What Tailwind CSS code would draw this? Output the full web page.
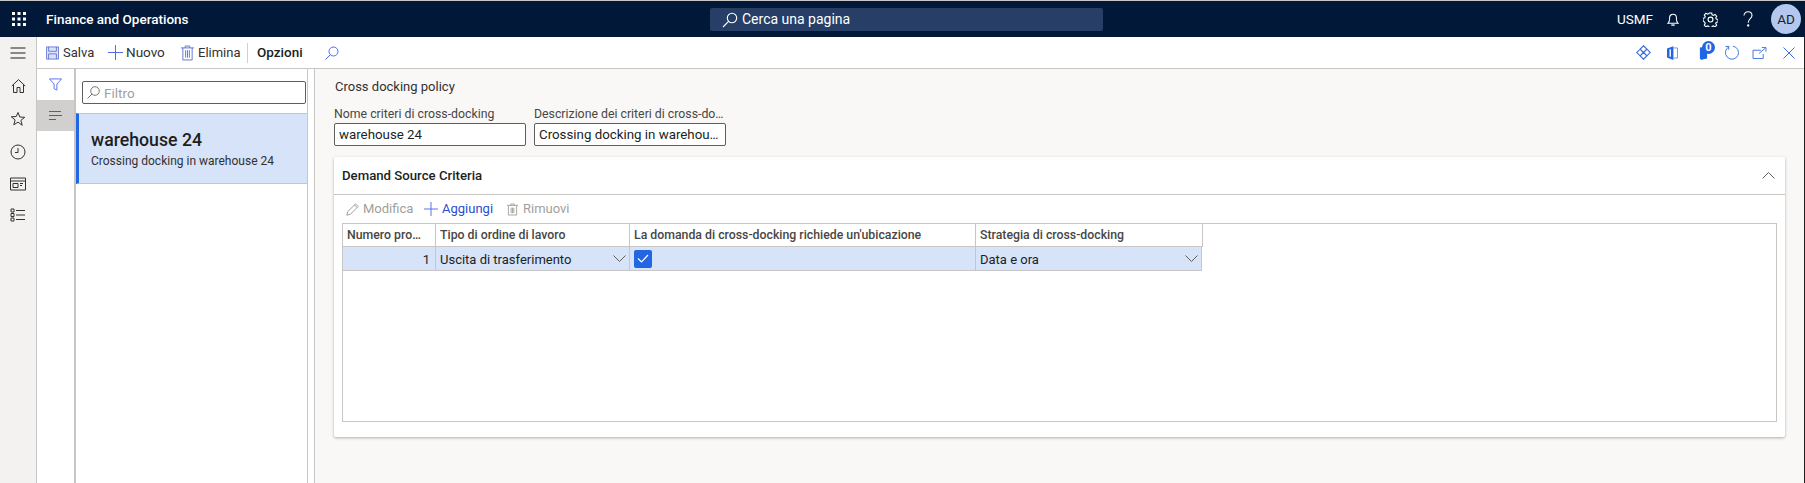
<!DOCTYPE html>
<html><head><meta charset="utf-8"><script src="https://cdn.jsdelivr.net/npm/@tailwindcss/browser@4"></script></head>
<body class="m-0 overflow-hidden">
<div class="w-[1805px] h-[483px] flex flex-col overflow-hidden bg-white text-[13px] text-[#201f1e] font-['Roboto','Open_Sans',sans-serif]">
<header class="h-[37px] shrink-0 border-t border-[#c8c6c4] bg-[#011838] text-white flex items-center relative">
  <div class="w-[37px] flex justify-center"><svg width="16" height="16" viewBox="0 0 16 16" fill="#fff"><rect x="1" y="1" width="3" height="3"/><rect x="6.500" y="1" width="3" height="3"/><rect x="12" y="1" width="3" height="3"/><rect x="1" y="6.500" width="3" height="3"/><rect x="6.500" y="6.500" width="3" height="3"/><rect x="12" y="6.500" width="3" height="3"/><rect x="1" y="12" width="3" height="3"/><rect x="6.500" y="12" width="3" height="3"/><rect x="12" y="12" width="3" height="3"/></svg></div>
  <div class="ml-[9px] font-medium text-[13.500px]">Finance and Operations</div>
  <div class="absolute left-[710px] top-[7px] w-[393px] h-[23px] rounded-[2px] bg-[#273f66] flex items-center pl-[12px] gap-[4px] text-[14px]">
    <svg width="16" height="16" viewBox="0 0 16 16" fill="none" stroke="#fff" stroke-width="1.100"><circle cx="10" cy="6" r="4.700"/><path d="M6.600 9.400 1 15"/></svg><span>Cerca una pagina</span></div>
  <div class="ml-auto flex items-center pr-[4px]">
    <span class="text-[13.500px] mr-[14px]">USMF</span>
    <svg class="mr-[24px]" width="12" height="15" viewBox="0 0 14 16" fill="none" stroke="#fff" stroke-width="1.200"><path d="M1 12.500c1.600-1 2-2.300 2-5V6a4 4 0 0 1 8 0v1.500c0 2.700.4 4 2 5z"/><path d="M5 14.500h4" stroke-width="1.600"/></svg>
    <svg class="mr-[25px]" width="15" height="15" viewBox="0 0 16 16" fill="none" stroke="#fff" stroke-width="1.200"><circle cx="8" cy="8" r="2.600"/><path d="M6.700 1h2.600l.4 2 1.300.6 1.800-1 1.800 1.900-1 1.700.6 1.300 1.900.5v2.600l-1.900.4-.6 1.300 1 1.800-1.800 1.700-1.800-1-1.300.6-.4 2H6.700l-.4-2-1.300-.6-1.800 1-1.800-1.700 1-1.800-.6-1.300L0 9.300V6.700l1.800-.5.600-1.300-1-1.700 1.800-1.900 1.800 1 1.300-.6z"/></svg>
    <svg class="mr-[18px]" width="10" height="16" viewBox="0 0 10 16" fill="none" stroke="#fff" stroke-width="1.100"><path d="M1 4.500C1 2.300 2.800.8 5 .8s4 1.500 4 3.700c0 3-3.800 3.300-3.800 7.200"/><circle cx="5.200" cy="14.500" r=".6" fill="#fff"/></svg>
    <div class="w-[30px] h-[30px] rounded-full bg-[#b4c7ef] text-[#201f1e] flex items-center justify-center text-[13.500px]">AD</div>
  </div>
</header>
<div class="flex-1 flex min-h-0 border-r border-[#1f1f1f]">
  <nav class="w-[37px] shrink-0 bg-[#f3f2f1] border-r border-[#c8c6c4] flex flex-col items-center pt-[8px] gap-[17px]">
    <svg width="16" height="16" viewBox="0 0 16 16" stroke="#201f1e" stroke-width="1.100"><path d="M.5 3h15M.5 8h15M.5 13h15"/></svg>
    <svg width="15" height="16" viewBox="0 0 15 16" fill="none" stroke="#323130"><path d="M.8 8 7.500 1.600 14.200 8M2.500 6.500v8h3.500v-5h3v5h3.500v-8"/></svg>
    <svg width="16" height="16" viewBox="0 0 16 16" fill="none" stroke="#323130"><path d="m8 1.500 1.800 4.500 4.900.3-3.800 3.100 1.300 4.900L8 11.100l-4.200 2.700 1.300-4.900-3.800-3.100 4.900-.3z"/></svg>
    <svg width="16" height="16" viewBox="0 0 16 16" fill="none" stroke="#323130"><circle cx="8" cy="8" r="7"/><path d="M8 4v4.500H5"/></svg>
    <svg width="16" height="14" viewBox="0 0 16 14" fill="none" stroke="#323130"><path d="M.5 1h15v12H.5zM.5 4h15"/><path d="M3 6.500h5v4H3zM10 6.500h3M10 8.500h2"/></svg>
    <svg width="16" height="14" viewBox="0 0 16 14" fill="none" stroke="#323130"><path d="M1 1h3v3H1zM1 5.500h3v3H1zM1 10h3v3H1zM6 2.500h9M6 7h9M6 11.500h9"/></svg>
  </nav>
  <div class="flex-1 flex flex-col min-w-0">
    <div class="h-[32px] shrink-0 border-b border-[#c8c6c4] bg-white flex items-center">
      <div class="flex items-center pl-[9px] text-[13px] text-[#323130]">
        <svg class="mr-[4px]" width="13" height="14" viewBox="0 0 15 15" fill="#dbe2f7" stroke="#5d6fd6"><path d="M.5.500h14v14H.5z"/><path d="M3 .5v5h9v-5M3 14.500v-6h9v6" fill="none"/></svg><span class="w-[45px]">Salva</span>
        <svg class="mr-[3px]" width="15" height="15" viewBox="0 0 15 15" stroke="#4f6bed"><path d="M0 7.500h15M7.500 0v15"/></svg><span class="w-[55px] text-[13.500px]">Nuovo</span>
        <svg class="mr-[4px]" width="13" height="16" viewBox="0 0 14 16" fill="none" stroke="#5d6fd6"><path d="M0 2.500h14M4.500 2.500v-2h5v2M2 2.500v13h10v-13M5 5v8M7 5v8M9 5v8"/></svg><span class="w-[49px]">Elimina</span>
        <div class="w-px h-[20px] bg-[#d2d0ce] mr-[9px]"></div>
        <span class="font-medium text-[13.500px] text-[#201f1e] w-[68px]">Opzioni</span>
        <svg width="14" height="14" viewBox="0 0 14 14" fill="none" stroke="#4f6bed"><circle cx="8.500" cy="5.500" r="4.500"/><path d="M5.300 8.700.5 13.500"/></svg>
      </div>
      <div class="ml-auto flex items-center pr-[9px]">
        <svg class="mr-[16px]" width="15" height="15" viewBox="0 0 16 16" fill="none" stroke="#3b6fe0" stroke-width="1.200"><path d="m8 .8 3.500 3.500L8 7.800 4.500 4.300zM4.300 4.500 7.800 8l-3.500 3.500L.8 8zM11.700 4.500 15.200 8l-3.500 3.500L8.200 8zM8 8.200l3.500 3.500L8 15.200l-3.500-3.500z"/></svg>
        <svg class="mr-[21px]" width="11" height="14" viewBox="0 0 12 15"><path d="M0 2.500 7 0v15l-7-2.500z" fill="#2266e3"/><path d="M7 2h4.500v11H7" fill="none" stroke="#6d8fd9"/><path d="M3.500 3.500v8" stroke="#fff" stroke-width="1.500"/></svg>
        <div class="relative w-[16px] h-[16px] mr-[9px]"><svg width="9" height="16" viewBox="0 0 10 16"><path d="M1 2v12c0 1 3 2 4 1l4-1V1z" fill="#2266e3"/></svg><span class="absolute left-[3px] top-[-4px] w-[13px] h-[13px] rounded-full bg-[#2266e3] text-white text-[11px] font-bold flex items-center justify-center leading-none">0</span></div>
        <svg class="mr-[13px]" width="15" height="15" viewBox="0 0 16 16" fill="none" stroke="#3b6fe0"><path d="M5.500 1.800A7 7 0 1 0 9.500 1.200M5 5V1.500H1.500"/></svg>
        <svg class="mr-[16px]" width="15" height="12" viewBox="0 0 15 13" fill="none" stroke="#3b6fe0"><path d="M9 3.500H.5v9h11v-5M7 7l7-6M10 .5h4.500V5"/></svg>
        <svg width="12" height="12" viewBox="0 0 12 12" stroke="#3b6fe0"><path d="m.5.5 11 11M11.500.5l-11 11"/></svg>
      </div>
    </div>
    <div class="flex-1 flex min-h-0">
      <aside class="w-[37px] shrink-0 bg-white flex flex-col">
        <div class="h-[31px] flex items-center justify-center"><svg width="13" height="13" viewBox="0 0 14 13" fill="none" stroke="#4f6bed"><path d="M.5.5h13L8.500 6v6.500l-3-1.500V6z"/></svg></div>
        <div class="h-[31px] bg-[#d2d0ce] flex items-center justify-center"><svg width="13" height="9" viewBox="0 0 13 9" stroke="#2266e3"><path d="M0 .5h12M0 4.500h13M0 8.500h7"/></svg></div>
      </aside>
      <div class="w-[241px] shrink-0 bg-white border-r border-[#c8c6c4] pr-[6px]">
      <section class="h-full border-l-2 border-r border-[#c8c6c4] flex flex-col pt-[12px]">
        <div class="ml-[6px] mr-[1px] h-[23px] border border-[#605e5c] rounded-[2px] flex items-center pl-[4px] gap-[4px] text-[13.500px] text-[#a19f9d]">
          <svg width="13" height="13" viewBox="0 0 13 13" fill="none" stroke="#797775"><circle cx="8" cy="5" r="4.300"/><path d="M5 8 .5 12.500"/></svg><span class="pt-[2px]">Filtro</span></div>
        <div class="mt-[9px] border-y-1 border-[#c8c6c4] border-l-[3px] border-l-[#2266e3] bg-[#d7e3f8] h-[71px] pl-[12px] pt-[14px]">
          <div class="text-[17.700px] leading-[24px] font-medium text-[#201f1e]">warehouse 24</div>
          <div class="text-[12px] leading-[18px] text-[#323130]">Crossing docking in warehouse 24</div>
        </div>
      </section>
      </div>
      <main class="flex-1 min-w-0 bg-[#f9f8f6] pl-[19px] pr-[19px] pt-[9px] flex flex-col">
        <div class="text-[13px] leading-[18px] pl-[1px] text-[#323130]">Cross docking policy</div>
        <div class="flex gap-[8px] mt-[10px]">
          <div class="w-[192px]"><div class="text-[12.300px] leading-[16px] mb-[1px] text-[#484644] truncate">Nome criteri di cross-docking</div><div class="h-[23px] border border-[#605e5c] rounded-[2px] bg-white px-[4px] leading-[21px] text-[13.300px]">warehouse 24</div></div>
          <div class="w-[192px]"><div class="text-[12.300px] leading-[16px] mb-[1px] text-[#484644] truncate">Descrizione dei criteri di cross-docking</div><div class="h-[23px] border border-[#605e5c] rounded-[2px] bg-white px-[4px] leading-[21px] text-[13.300px] truncate">Crossing docking in warehouse 24</div></div>
        </div>
        <div class="mt-[11px] h-[280px] bg-white shadow-[0_1px_3px_rgba(0,0,0,0.3)] rounded-[2px] flex flex-col">
          <div class="h-[38px] shrink-0 border-b border-[#c8c6c4] flex items-center justify-between pl-[8px] pr-[10px]">
            <span class="font-medium text-[13.200px]">Demand Source Criteria</span>
            <svg width="13" height="7" viewBox="0 0 13 7" fill="none" stroke="#605e5c"><path d="m.5 6.500 6-6 6 6"/></svg>
          </div>
          <div class="h-[28px] shrink-0 flex items-center pl-[12px] text-[13px]">
            <svg class="mr-[4px]" width="13" height="13" viewBox="0 0 13 13" fill="none" stroke="#a19f9d"><path d="m.8 12.200.9-3.500L9.500.9l2.600 2.600-7.800 7.800zM8.500 2 11 4.500"/></svg><span class="text-[#a19f9d] w-[61px]">Modifica</span>
            <svg class="mr-[4px]" width="14" height="14" viewBox="0 0 15 15" stroke="#4f6bed"><path d="M0 7.500h15M7.500 0v15"/></svg><span class="text-[#2b4ed1] w-[65px]">Aggiungi</span>
            <svg class="mr-[5px]" width="11" height="13" viewBox="0 0 12 13" fill="none" stroke="#a19f9d"><path d="M0 2h12M4 2V.5h4V2M1.500 2v10.500h9V2M4.500 4.500v6M6 4.500v6M7.500 4.500v6"/></svg><span class="text-[#a19f9d]">Rimuovi</span>
          </div>
          <div class="mx-[8px] h-[199px] border border-[#c8c6c4]">
            <div class="flex h-[23px] w-[860px] border-b border-[#c8c6c4] text-[12.300px] leading-[23px] text-[#484644] font-medium">
              <div class="w-[93px] shrink-0 pl-[4px] pr-[10px] border-r border-[#c8c6c4] truncate">Numero progressivo</div>
              <div class="w-[194px] shrink-0 pl-[4px] border-r border-[#c8c6c4]">Tipo di ordine di lavoro</div>
              <div class="w-[346px] shrink-0 pl-[4px] border-r border-[#c8c6c4]">La domanda di cross-docking richiede un'ubicazione</div>
              <div class="w-[227px] shrink-0 pl-[4px] border-r border-[#c8c6c4]">Strategia di cross-docking</div>
            </div>
            <div class="flex h-[24px] w-[859px] bg-[#d7e3f8] border-b border-r border-[#c8c6c4] text-[13px] leading-[23px]">
              <div class="w-[93px] shrink-0 pr-[5px] pt-[1px] text-right border-r border-[#c8c6c4]">1</div>
              <div class="w-[194px] shrink-0 pl-[4px] pr-[3px] border-r border-[#c8c6c4] flex items-center justify-between"><span class="pt-[1px]">Uscita di trasferimento</span><svg width="13" height="7" viewBox="0 0 13 7" fill="none" stroke="#605e5c"><path d="m.5.5 6 6 6-6"/></svg></div>
              <div class="w-[346px] shrink-0 pl-[4px] border-r border-[#c8c6c4] flex items-center"><div class="w-[18px] h-[18px] rounded-[2px] bg-[#2266e3] flex items-center justify-center"><svg width="12" height="9" viewBox="0 0 12 9" fill="none" stroke="#fff" stroke-width="1.200"><path d="m1 4.500 3.500 3.500L11 1"/></svg></div></div>
              <div class="flex-1 pl-[4px] pr-[3px] flex items-center justify-between"><span class="pt-[1px]">Data e ora</span><svg width="13" height="7" viewBox="0 0 13 7" fill="none" stroke="#605e5c"><path d="m.5.5 6 6 6-6"/></svg></div>
            </div>
          </div>
        </div>
      </main>
    </div>
  </div>
</div>
</div>
</body></html>
